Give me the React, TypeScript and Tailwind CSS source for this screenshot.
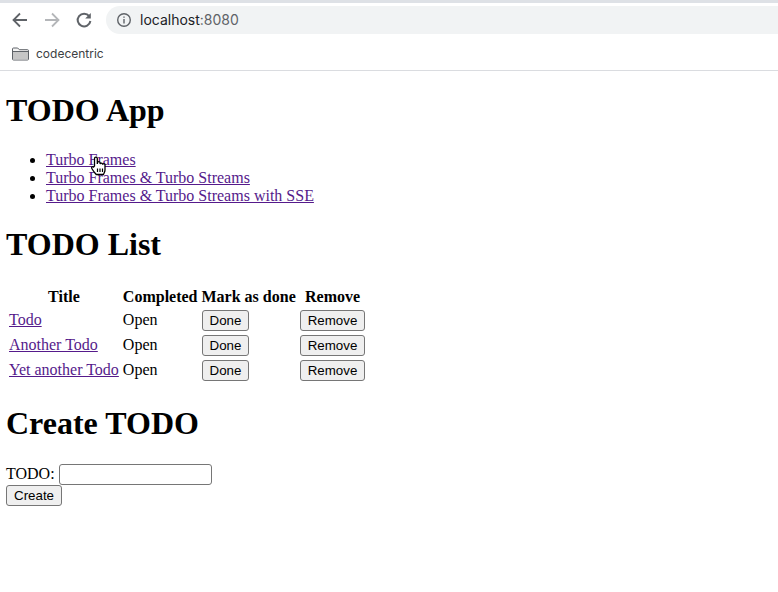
import React from "react";

const todos = ["Todo", "Another Todo", "Yet another Todo"];
const links = [
  "Turbo Frames",
  "Turbo Frames & Turbo Streams",
  "Turbo Frames & Turbo Streams with SSE",
];

const btn =
  "h-[21px] px-[7px] border border-[#767676] rounded-[3px] bg-[#efefef] text-black text-[13.33px] leading-[15px] font-['Liberation_Sans',sans-serif]";

function BrowserBar() {
  return (
    <div className="border-b border-[#dadce0] font-['Inter',sans-serif]">
      <div className="h-[3px] bg-[#dee1e6]" />
      <div className="h-[34px] flex items-center pl-[10px]">
        <svg className="w-[20px] h-[20px] text-[#5f6368]" viewBox="0 0 20 20" fill="none" stroke="currentColor" strokeWidth="1.8">
          <path d="M17 10H4M10 3.5 3.5 10l6.5 6.5" />
        </svg>
        <svg className="w-[20px] h-[20px] ml-[12px] text-[#b4b6b9]" viewBox="0 0 20 20" fill="none" stroke="currentColor" strokeWidth="1.8">
          <path d="M3 10h13M10 3.5l6.5 6.5-6.5 6.5" />
        </svg>
        <svg className="w-[20px] h-[20px] ml-[12px] text-[#5f6368]" viewBox="0 0 20 20" fill="none">
          <path d="M15.2 6.2A6.4 6.4 0 1 0 16.4 11" stroke="currentColor" strokeWidth="2" />
          <path d="M16.8 3v5.6h-5.6z" fill="currentColor" />
        </svg>
        <div className="ml-[12px] flex-1 h-[28px] rounded-l-[14px] bg-[#f1f3f4] flex items-center pl-[10px]">
          <svg className="w-[16px] h-[16px] text-[#5f6368]" viewBox="0 0 16 16" fill="none" stroke="currentColor" strokeWidth="1.4">
            <circle cx="8" cy="8" r="6.3" />
            <path d="M8 7v4.4M8 4.4v1.4" />
          </svg>
          <span className="ml-[8px] text-[14px] text-[#202124]">
            localhost<span className="text-[#5f6368]">:8080</span>
          </span>
        </div>
      </div>
      <div className="h-[33px] flex items-center pl-[12px]">
        <svg className="w-[17px] h-[14px]" viewBox="0 0 17 14">
          <path d="M.5 2a1 1 0 0 1 1-1h4.200l1.600 1.700h8.200a1 1 0 0 1 1 1v8.300a1 1 0 0 1-1 1h-14a1 1 0 0 1-1-1z" fill="#f4f4f4" stroke="#5f6368" />
          <path d="M1 4.500h15V12a.5.5 0 0 1-.5.5h-14A.5.5 0 0 1 1 12z" fill="#c6c6c6" />
          <path d="M1 4.500h15" stroke="#5f6368" />
        </svg>
        <span className="ml-[7px] text-[12px] text-[#3c4043]">codecentric</span>
      </div>
    </div>
  );
}

function HandCursor() {
  return (
    <svg className="absolute left-[90px] top-[156px] w-[17px] h-[20px]" viewBox="0 0 17 20">
      <path
        d="M4.500 10V2.600a1.400 1.400 0 0 1 2.800 0V8l.2-1.200a1.300 1.300 0 0 1 2.600.2V8a1.300 1.300 0 0 1 2.500.2v.6a1.200 1.200 0 0 1 2.400.2v5c0 2-1 3-1.600 4.500H6.200C5 17 3.500 15.500 1.800 12.500c-.8-1.300.8-2.500 1.800-1.500z"
        fill="#fff"
        stroke="#000"
        strokeWidth="1.300"
      />
      <path d="M7.500 12.500v3.500M10 12.500v3.500M12.500 12.500v3.500" stroke="#000" strokeWidth="1.200" />
    </svg>
  );
}

export default function App() {
  return (
    <div className="relative min-h-[592px] bg-white text-black text-[16px] leading-[18px] font-['Liberation_Serif',serif]">
      <BrowserBar />
      <div className="px-[6px]">
        <h1 className="mt-[21px] mb-[22px] text-[32px] leading-[37px] font-bold">TODO App</h1>
        <ul className="list-disc pl-[40px]">
          {links.map((l) => (
            <li key={l}>
              <a href="#" className="underline text-[#551a8b]">{l}</a>
            </li>
          ))}
        </ul>
        <h1 className="mt-[21px] mb-[22px] text-[32px] leading-[37px] font-bold">TODO List</h1>
        <table className="border-separate border-spacing-[2px]">
          <thead>
            <tr>
              <th className="p-[1px] text-center">Title</th>
              <th className="p-[1px] text-center">Completed</th>
              <th className="p-[1px] text-center">Mark as done</th>
              <th className="p-[1px] text-center">Remove</th>
            </tr>
          </thead>
          <tbody>
            {todos.map((t) => (
              <tr key={t}>
                <td className="p-[1px] pb-[3px]">
                  <a href="#" className="underline text-[#551a8b]">{t}</a>
                </td>
                <td className="p-[1px] pb-[3px]">Open</td>
                <td className="p-[1px]"><button className={btn}>Done</button></td>
                <td className="p-[1px]"><button className={btn}>Remove</button></td>
              </tr>
            ))}
          </tbody>
        </table>
        <h1 className="mt-[21px] mb-[22px] text-[32px] leading-[37px] font-bold">Create TODO</h1>
        <div>
          <label>TODO: </label>
          <input className="w-[153px] h-[21px] border border-[#767676] rounded-[3px] px-[2px] align-[-1px]" />
        </div>
        <button className={btn}>Create</button>
      </div>
      <HandCursor />
    </div>
  );
}
